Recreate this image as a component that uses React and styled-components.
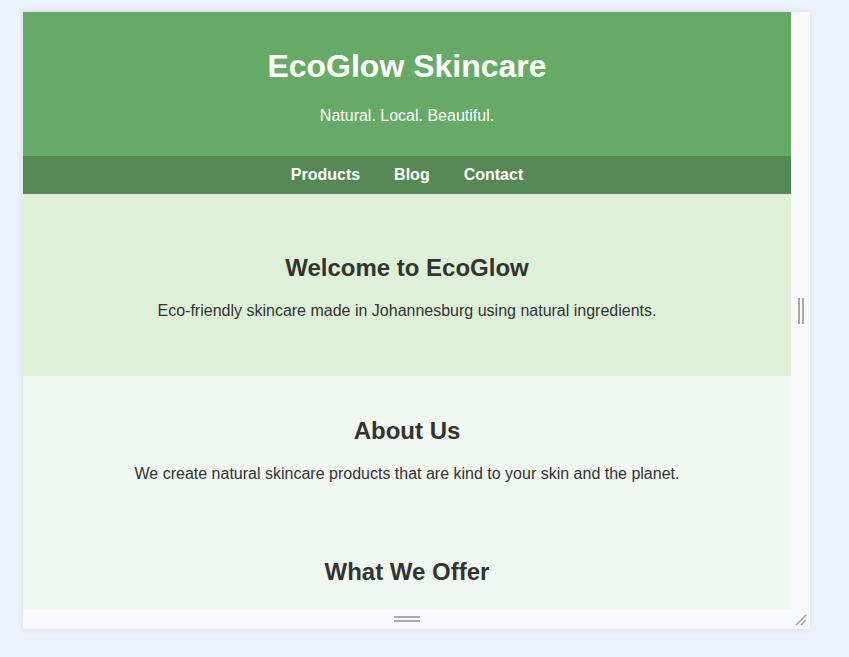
import React from 'react';
import styled, { createGlobalStyle } from 'styled-components';

const GlobalStyle = createGlobalStyle`
  * { box-sizing: border-box; }
  body {
    margin: 0;
    background: #edf1f9;
    font-family: "Liberation Sans", Arial, sans-serif;
  }
`;

const Stage = styled.div`
  padding: 12px 0 0 23px;
  height: 657px;
`;

const Frame = styled.div`
  display: grid;
  grid-template-columns: 768px 19px;
  grid-template-rows: 597px 20px;
  width: 787px;
  background: #f7f9fe;
  box-shadow: 0 0 6px rgba(120, 130, 160, 0.18);
`;

const Viewport = styled.div`
  grid-column: 1;
  grid-row: 1;
  overflow: hidden;
  background: #fff;
  color: #333;
`;

const RightRail = styled.div`
  grid-column: 2;
  grid-row: 1;
  display: flex;
  align-items: center;
  justify-content: center;
`;

const BottomRail = styled.div`
  grid-column: 1;
  grid-row: 2;
  display: flex;
  align-items: center;
  justify-content: center;
`;

const Corner = styled.div`
  grid-column: 2;
  grid-row: 2;
  display: flex;
  align-items: flex-end;
  justify-content: flex-end;
  padding: 0 3px 3px 0;
`;

const GripV = styled.div`
  width: 6px;
  height: 26px;
  border-left: 2px solid #a9a9a9;
  border-right: 2px solid #a9a9a9;
`;

const GripH = styled.div`
  width: 26px;
  height: 6px;
  border-top: 2px solid #a9a9a9;
  border-bottom: 2px solid #a9a9a9;
`;

const Header = styled.header`
  background: #66aa66;
  color: #fff;
  text-align: center;
  padding: 36px 20px 31px;
`;

const Title = styled.h1`
  margin: 0;
  font-size: 32px;
  line-height: 37px;
  font-weight: 700;
`;

const Tagline = styled.p`
  margin: 22px 0 0;
  font-size: 16px;
  line-height: 18px;
`;

const Nav = styled.nav`
  background: #558855;
  display: flex;
  justify-content: center;
  align-items: center;
  gap: 34px;
  height: 38px;
`;

const NavLink = styled.a`
  color: #fff;
  font-weight: 700;
  font-size: 16px;
  text-decoration: none;
`;

const Section = styled.section`
  background: ${(p) => p.$bg};
  text-align: center;
  padding: ${(p) => p.$pad};
`;

const Block = styled.div`
  padding: ${(p) => p.$top || 20}px 20px 20px;
`;

const Heading = styled.h2`
  margin: 0 0 ${(p) => p.$gap || 20}px;
  font-size: 24px;
  line-height: 28px;
  font-weight: 700;
`;

const Text = styled.p`
  margin: 0;
  font-size: 16px;
  line-height: 18px;
`;

const CornerGrip = () => (
  <svg width="13" height="13" viewBox="0 0 13 13">
    <path d="M2 12 L12 2 M7 12 L12 7" stroke="#a9a9a9" strokeWidth="1.6" />
  </svg>
);

export default function App() {
  return (
    <>
      <GlobalStyle />
      <Stage>
        <Frame>
          <Viewport>
            <Header>
              <Title>EcoGlow Skincare</Title>
              <Tagline>Natural. Local. Beautiful.</Tagline>
            </Header>
            <Nav>
              <NavLink href="#">Products</NavLink>
              <NavLink href="#">Blog</NavLink>
              <NavLink href="#">Contact</NavLink>
            </Nav>
            <Section $bg="#dff0d8" $pad="60px 20px 56px">
              <Heading>Welcome to EcoGlow</Heading>
              <Text>Eco-friendly skincare made in Johannesburg using natural ingredients.</Text>
            </Section>
            <Section $bg="#f1f8f1" $pad="0">
              <Block $top={41}>
                <Heading>About Us</Heading>
                <Text>We create natural skincare products that are kind to your skin and the planet.</Text>
              </Block>
              <Block $top={55}>
                <Heading $gap={26}>What We Offer</Heading>
                <Text>Face creams, body butters, and cleansers made with local botanicals.</Text>
              </Block>
            </Section>
          </Viewport>
          <RightRail>
            <GripV />
          </RightRail>
          <BottomRail>
            <GripH />
          </BottomRail>
          <Corner>
            <CornerGrip />
          </Corner>
        </Frame>
      </Stage>
    </>
  );
}
